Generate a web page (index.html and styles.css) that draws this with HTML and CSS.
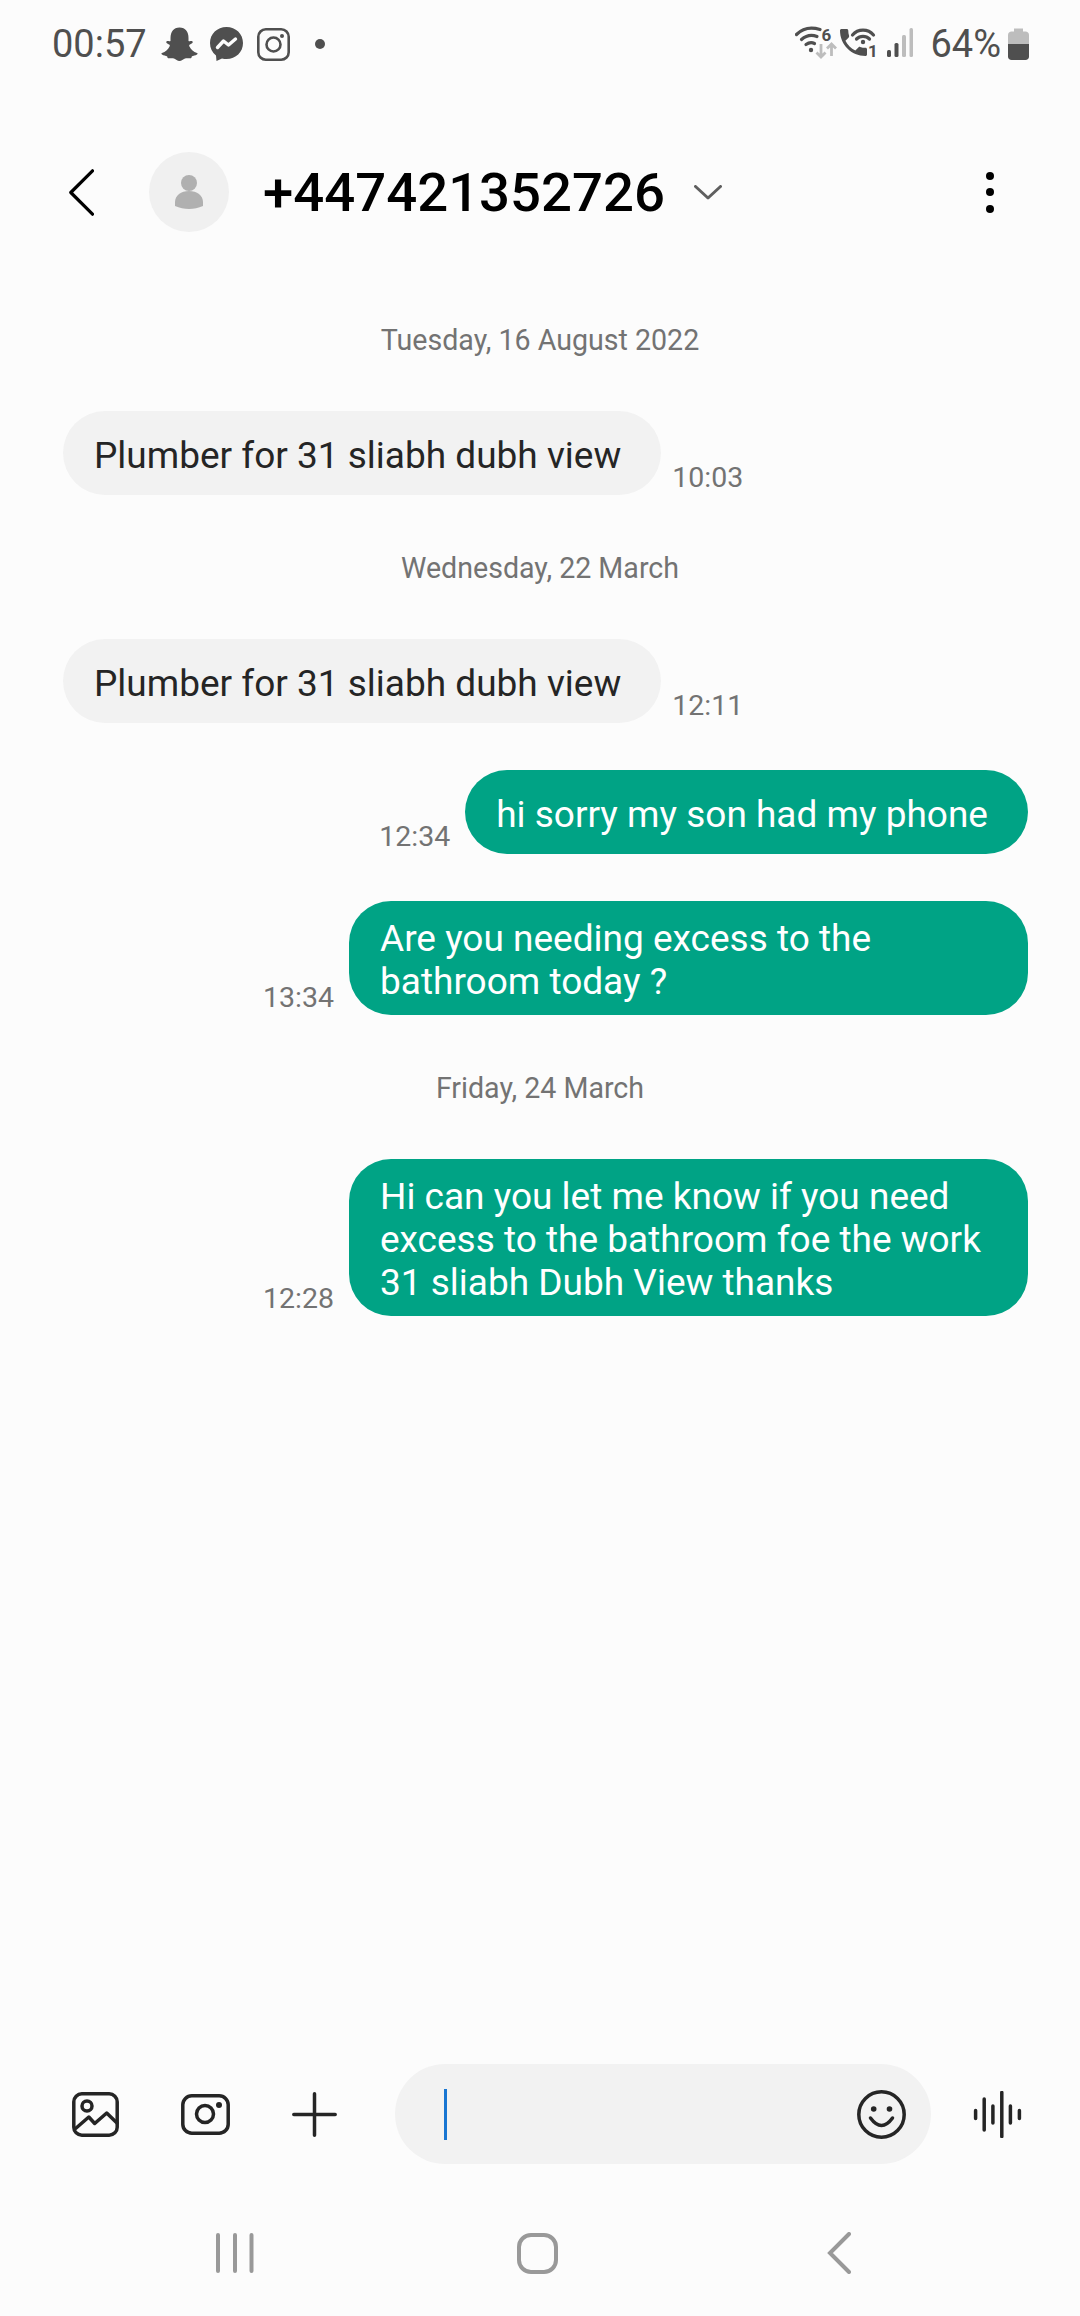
FILE: index.html
```html
<!DOCTYPE html>
<html lang="en">
<head>
<meta charset="utf-8">
<title>Messages</title>
<link rel="stylesheet" href="styles.css">
</head>
<body>
<div class="screen">
  <div class="status">
    <div class="status-left">
      <span class="clock">00:57</span>
      <svg class="ic-snap" width="37" height="34" viewBox="0 0 37 34"><path fill="#4f4f4f" d="M18.5 0.5C24.5 0.5 27.5 5 27.5 11L27.5 14C29 14.8 30.5 13.5 31.5 14.5C32.5 15.8 30 17 28.5 17.7C28 18 28.2 19 28.6 19.8C30 22.8 32.5 25 36 26C36.8 26.3 36.8 27 36 27.4C34.5 28.5 32 28.6 31 29.2C30.5 30 30.6 31 29.8 31.3C28 31.5 26 30.7 24 31.6C22 32.6 20.7 34 18.5 34C16.3 34 15 32.6 13 31.6C11 30.7 9 31.5 7.2 31.3C6.4 31 6.5 30 6 29.2C5 28.6 2.5 28.5 1 27.4C.2 27 .2 26.3 1 26C4.5 25 7 22.8 8.4 19.8C8.8 19 9 18 8.5 17.7C7 17 4.5 15.8 5.5 14.5C6.5 13.5 8 14.8 9.5 14L9.5 11C9.5 5 12.5 0.5 18.5 0.5Z"/></svg>
      <svg class="ic-msg" width="33" height="34" viewBox="0 0 33 34"><path fill="#4f4f4f" d="M16.5 0C25.8 0 33 6.8 33 16S25.8 32 16.5 32C15 32 13.5 31.8 12 31.4L6.5 34L6 28.6C2.2 25.6 0 21.2 0 16C0 6.8 7.2 0 16.5 0Z"/><path fill="none" stroke="#fcfcfc" stroke-width="3.4" stroke-linejoin="round" stroke-linecap="round" d="M7.5 20.5L13.5 14L18.5 18L25.5 12"/></svg>
      <svg class="ic-insta" width="33" height="33" viewBox="0 0 33 33"><rect x="1.3" y="1.3" width="30.4" height="30.4" rx="7.5" fill="none" stroke="#4f4f4f" stroke-width="2.6"/><circle cx="16.5" cy="16.5" r="7" fill="none" stroke="#4f4f4f" stroke-width="2.6"/><circle cx="25" cy="8" r="2" fill="#4f4f4f"/></svg>
      <span class="status-dot"></span>
    </div>
    <div class="status-right">
      <svg class="ic-net" width="125" height="40" viewBox="0 0 125 40">
        <g fill="none" stroke="#4f4f4f" stroke-width="3.2" stroke-linecap="round">
          <path d="M1.5 10.5C8 4 17 3 25 5.5"/>
          <path d="M6.5 15.5C11 11.5 17 10.5 22 12.5"/>
          <path d="M11 20.5C13.5 18.7 17 18.3 19.5 19.5"/>
          <path d="M57.5 11C63 4.5 73 4.5 78.5 11"/>
          <path d="M61.5 15C65 11.5 71 11.5 74.5 15"/>
        </g>
        <circle cx="16" cy="26" r="2.2" fill="#4f4f4f"/>
        <circle cx="68" cy="18" r="2.2" fill="#4f4f4f"/>
        <text class="net-num" x="26.5" y="17">6</text>
        <text class="net-num" x="73" y="33">1</text>
        <path fill="none" stroke="#bdbdbd" stroke-width="2.8" d="M26 20V33M21.5 28.5L26 33L30.5 28.5M36.5 32V20M32 24.5L36.5 20L41 24.5"/>
        <path fill="#4f4f4f" transform="translate(40.5 0.5) scale(1.5)" d="M6.62 10.79c1.44 2.83 3.76 5.14 6.59 6.59l2.2-2.2c.27-.27.67-.36 1.02-.24 1.12.37 2.33.57 3.57.57.55 0 1 .45 1 1V20c0 .55-.45 1-1 1-9.39 0-17-7.61-17-17 0-.55.45-1 1-1h3.5c.55 0 1 .45 1 1 0 1.25.2 2.45.57 3.57.11.35.03.74-.25 1.02l-2.2 2.2z"/>
        <rect x="92" y="26" width="4" height="7" rx="1.5" fill="#4f4f4f"/>
        <rect x="99.5" y="19" width="4" height="14" rx="1.5" fill="#4f4f4f"/>
        <rect x="107" y="11" width="4" height="22" rx="1.5" fill="#bdbdbd"/>
        <rect x="114.5" y="4" width="3.5" height="29" rx="1.5" fill="#bdbdbd"/>
      </svg>
      <span class="battery-text">64%</span>
      <svg class="ic-batt" width="21" height="32" viewBox="0 0 21 32"><path fill="#bdbdbd" d="M6 0.5H15V3.5H17.5C19.5 3.5 21 5 21 7V16H0V7C0 5 1.5 3.5 3.5 3.5H6Z"/><path fill="#4f4f4f" d="M0 16H21V28.5C21 30.5 19.5 32 17.5 32H3.5C1.5 32 0 30.5 0 28.5Z"/></svg>
    </div>
  </div>

  <div class="header">
    <svg class="ic-back" width="25" height="47" viewBox="0 0 25 47"><path fill="none" stroke="#000" stroke-width="3.2" stroke-linecap="round" stroke-linejoin="round" d="M23.5 1.8L1.8 23.5L23.5 45.2"/></svg>
    <div class="avatar">
      <svg width="30" height="34" viewBox="0 0 30 34"><circle cx="15" cy="8" r="8" fill="#b0b0b0"/><path fill="#b0b0b0" d="M1 31V27C1 20.5 7 16 15 16S29 20.5 29 27V31C20 35 10 35 1 31Z"/></svg>
    </div>
    <span class="title">+447421352726</span>
    <svg class="ic-down" width="28" height="15" viewBox="0 0 28 15"><path fill="none" stroke="#5f5f5f" stroke-width="3" stroke-linecap="round" stroke-linejoin="round" d="M1.5 1.5L14 13L26.5 1.5"/></svg>
    <div class="more"><span></span><span></span><span></span></div>
  </div>

  <div class="thread">
    <div class="date date-first">Tuesday, 16 August 2022</div>
    <div class="row row-in">
      <div class="bubble bubble-in">Plumber for 31 sliabh dubh view</div>
      <span class="time">10:03</span>
    </div>
    <div class="date">Wednesday, 22 March</div>
    <div class="row row-in">
      <div class="bubble bubble-in">Plumber for 31 sliabh dubh view</div>
      <span class="time">12:11</span>
    </div>
    <div class="row row-out row-gap">
      <span class="time">12:34</span>
      <div class="bubble bubble-out">hi sorry my son had my phone</div>
    </div>
    <div class="row row-out row-gap">
      <span class="time">13:34</span>
      <div class="bubble bubble-out">Are you needing excess to the bathroom today ?</div>
    </div>
    <div class="date">Friday, 24 March</div>
    <div class="row row-out">
      <span class="time">12:28</span>
      <div class="bubble bubble-out">Hi can you let me know if you need excess to the bathroom foe the work 31 sliabh Dubh View thanks</div>
    </div>
  </div>

  <div class="composer">
    <div class="tools">
      <svg width="47" height="45" viewBox="0 0 47 45" class="tool-ic"><rect x="1.8" y="1.8" width="43.4" height="41.4" rx="8" class="ln"/><circle cx="15" cy="14" r="5" class="ln"/><path class="ln" d="M3 37L16.8 25L22.7 31.5L34.7 21L45 31"/></svg>
      <svg width="49" height="41" viewBox="0 0 49 41" class="tool-ic"><rect x="1.8" y="1.8" width="45.4" height="37.4" rx="9" class="ln"/><circle cx="24" cy="20" r="8.5" class="ln"/><circle cx="38" cy="11" r="3" class="dotf"/></svg>
      <svg width="45" height="45" viewBox="0 0 45 45" class="tool-ic"><path class="ln" d="M22.5 1.8V43.2M1.8 22.5H43.2"/></svg>
    </div>
    <div class="input">
      <span class="caret"></span>
      <svg width="49" height="49" viewBox="0 0 49 49"><circle cx="24.5" cy="24.5" r="22.7" class="ln"/><circle cx="16.7" cy="19" r="2.8" class="dotf"/><circle cx="32.5" cy="19" r="2.8" class="dotf"/><path class="ln" d="M13.5 28Q24.5 43 35.5 28"/></svg>
    </div>
    <svg class="wave" width="49" height="47" viewBox="0 0 49 47"><path class="ln" d="M2.6 19.5V27.5M11.2 8V39M19.9 15V32M28.8 1.5V45.5M37.4 15V32M46.4 19.5V27.5"/></svg>
  </div>

  <div class="nav">
    <div class="nav-cell"><svg width="38" height="40" viewBox="0 0 38 40"><path fill="none" stroke="#999" stroke-width="4" stroke-linecap="round" d="M2 2V38M19 2V38M35.5 2V38"/></svg></div>
    <div class="nav-cell"><svg width="41" height="41" viewBox="0 0 41 41"><rect x="2" y="2" width="37" height="37" rx="12" fill="none" stroke="#999" stroke-width="4"/></svg></div>
    <div class="nav-cell"><svg width="24" height="42" viewBox="0 0 24 42"><path fill="none" stroke="#999" stroke-width="4" stroke-linecap="round" stroke-linejoin="miter" d="M22 2L3 21L22 40"/></svg></div>
  </div>
</div>
</body>
</html>
```

FILE: styles.css
```css
html, body {
  margin: 0;
  padding: 0;
  background: #fcfcfc;
}
.screen {
  width: 1080px;
  height: 2316px;
  display: flex;
  flex-direction: column;
  background: #fcfcfc;
  font-family: Roboto, "Liberation Sans", sans-serif;
  overflow: hidden;
}
svg { display: block; flex: none; }

/* status bar */
.status {
  height: 88px;
  flex: none;
  display: flex;
  justify-content: space-between;
  align-items: center;
  padding: 0 51px 0 52px;
  color: #4f4f4f;
}
.status-left, .status-right {
  display: flex;
  align-items: center;
}
.clock {
  font-size: 38px;
  line-height: 44px;
  margin-right: 14px;
}
.ic-msg { margin-left: 12px; }
.ic-insta { margin-left: 14px; }
.status-dot {
  width: 10px;
  height: 10px;
  margin-left: 25px;
  border-radius: 50%;
  background: #4f4f4f;
}
.net-num {
  font-size: 17px;
  font-weight: 700;
  fill: #4f4f4f;
}
.battery-text {
  font-size: 38px;
  line-height: 44px;
  margin-left: 10px;
  margin-right: 7px;
}

/* header */
.header {
  height: 208px;
  flex: none;
  display: flex;
  align-items: center;
  padding-left: 69px;
}
.avatar {
  width: 80px;
  height: 80px;
  margin-left: 55px;
  border-radius: 50%;
  background: #f0f0f0;
  display: flex;
  align-items: center;
  justify-content: center;
}
.title {
  margin-left: 34px;
  font-size: 54.5px;
  font-weight: 500;
  color: #000;
}
.ic-down { margin-left: 29px; }
.more {
  display: flex;
  flex-direction: column;
  gap: 8.5px;
  margin-left: auto;
  margin-right: 86px;
}
.more span {
  width: 8px;
  height: 8px;
  border-radius: 50%;
  background: #000;
}

/* thread */
.thread {
  flex: 1;
  padding: 24px 52px 0;
  min-height: 0;
}
.date {
  height: 40px;
  line-height: 40px;
  margin: 53px 0 51px;
  text-align: center;
  font-size: 28.6px;
  color: #737373;
}
.date-first { margin-top: 0; }
.row {
  display: flex;
  align-items: flex-end;
}
.row-in { padding-left: 11px; }
.row-out { justify-content: flex-end; }
.row-gap { margin-top: 47px; }
.bubble {
  box-sizing: border-box;
  min-height: 84px;
  max-width: 679px;
  padding: 16px 40px 12px 31px;
  border-radius: 42px;
  font-size: 37px;
  line-height: 43px;
  display: flex;
  align-items: center;
}
.bubble-in {
  background: #f2f2f2;
  color: #252525;
}
.bubble-out {
  background: #00a385;
  color: #fff;
}
.time {
  font-size: 28.5px;
  line-height: 32px;
  color: #737373;
  padding-bottom: 1px;
}
.row-in .time { margin-left: 11px; }
.row-out .time { margin-right: 15px; }

/* composer */
.composer {
  flex: none;
  display: flex;
  align-items: center;
  height: 100px;
  padding-left: 72px;
}
.tools {
  display: flex;
  align-items: center;
  gap: 62px;
}
.ln {
  fill: none;
  stroke: #252525;
  stroke-width: 3.5;
  stroke-linecap: round;
  stroke-linejoin: round;
}
.dotf { fill: #252525; }
.input {
  box-sizing: border-box;
  width: 536px;
  height: 100px;
  margin-left: 58px;
  padding: 0 25px 0 49px;
  border-radius: 50px;
  background: #f2f2f2;
  display: flex;
  align-items: center;
  justify-content: space-between;
}
.caret {
  width: 3px;
  height: 51px;
  background: #1976d2;
}
.wave { margin-left: 42px; }

/* nav */
.nav {
  flex: none;
  display: grid;
  grid-template-columns: repeat(3, 302px);
  align-items: center;
  justify-items: center;
  height: 42px;
  padding: 68px 84px 42px;
}
```
